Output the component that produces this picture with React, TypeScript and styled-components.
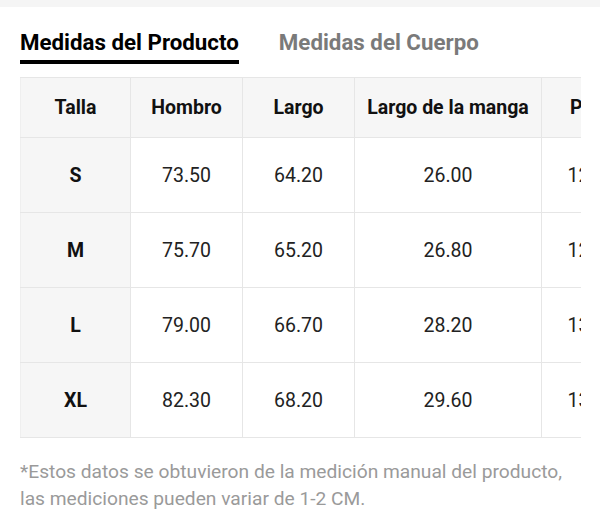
import styled, { createGlobalStyle } from "styled-components";

const GlobalStyle = createGlobalStyle`
  body {
    margin: 0;
    background: #fff;
    font-family: Roboto, "Liberation Sans", Arial, sans-serif;
  }
`;

const TopBar = styled.div`
  height: 7px;
  background: #f5f5f5;
`;

const Page = styled.div`
  padding: 0 19px 0 20px;
`;

const Tabs = styled.div`
  display: flex;
  gap: 40px;
  margin-top: 22px;
`;

const Tab = styled.div<{ active?: boolean }>`
  font-size: 22.3px;
  font-weight: 700;
  line-height: 26px;
  padding-bottom: 5px;
  color: ${(p) => (p.active ? "#000" : "#7a7a7a")};
  border-bottom: 4px solid ${(p) => (p.active ? "#000" : "transparent")};
`;

const TableWrap = styled.div`
  margin-top: 13px;
  width: 561px;
  overflow: hidden;
`;

const Table = styled.table`
  border-collapse: collapse;
  table-layout: fixed;
  width: 633px;
`;

const Cell = styled.td<{ head?: boolean; side?: boolean }>`
  border: 1px solid #e6e6e6;
  text-align: center;
  white-space: nowrap;
  font-size: 19.5px;
  height: ${(p) => (p.head ? "59px" : "74px")};
  padding: 0;
  font-weight: ${(p) => (p.head || p.side ? 700 : 400)};
  color: ${(p) => (p.head || p.side ? "#111" : "#222")};
  background: ${(p) => (p.head || p.side ? "#f6f6f6" : "#fff")};
  &:first-child {
    border-left: 1px solid #efefef;
  }
`;

const Note = styled.p`
  margin: 20px 0 0;
  font-size: 19.2px;
  line-height: 27px;
  color: #9a9a9a;
  white-space: nowrap;
`;

const columns = [
  { label: "Talla", width: 110 },
  { label: "Hombro", width: 112 },
  { label: "Largo", width: 112 },
  { label: "Largo de la manga", width: 187 },
  { label: "Pecho", width: 112 },
];

const rows = [
  ["S", "73.50", "64.20", "26.00", "122.00"],
  ["M", "75.70", "65.20", "26.80", "126.00"],
  ["L", "79.00", "66.70", "28.20", "132.00"],
  ["XL", "82.30", "68.20", "29.60", "138.00"],
];

export default function App() {
  return (
    <>
      <GlobalStyle />
      <TopBar />
      <Page>
        <Tabs>
          <Tab active>Medidas del Producto</Tab>
          <Tab>Medidas del Cuerpo</Tab>
        </Tabs>
        <TableWrap>
          <Table>
            <colgroup>
              {columns.map((c) => (
                <col key={c.label} style={{ width: c.width }} />
              ))}
            </colgroup>
            <thead>
              <tr>
                {columns.map((c) => (
                  <Cell as="th" head key={c.label}>
                    {c.label}
                  </Cell>
                ))}
              </tr>
            </thead>
            <tbody>
              {rows.map((r) => (
                <tr key={r[0]}>
                  {r.map((v, i) => (
                    <Cell key={i} side={i === 0}>
                      {v}
                    </Cell>
                  ))}
                </tr>
              ))}
            </tbody>
          </Table>
        </TableWrap>
        <Note>
          *Estos datos se obtuvieron de la medición manual del producto,
          <br />
          las mediciones pueden variar de 1-2 CM.
        </Note>
      </Page>
    </>
  );
}
